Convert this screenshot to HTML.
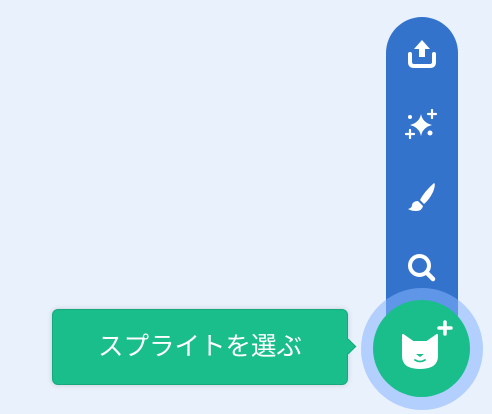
<!DOCTYPE html>
<html><head><meta charset="utf-8"><style>
html,body{margin:0;padding:0;width:492px;height:414px;overflow:hidden;background:#e9f1fc;font-family:"Liberation Sans","Noto Sans CJK JP",sans-serif;}
.bar{position:absolute;left:386px;top:17px;width:72px;height:330px;background:#3373cc;border-radius:36px 36px 0 0;}
.halo{position:absolute;left:361px;top:288px;width:122px;height:122px;border-radius:50%;background:rgba(133,178,255,0.55);}
.btn{position:absolute;left:373px;top:300px;width:97px;height:97px;border-radius:50%;background:#19be8b;}
.tip{position:absolute;left:52px;top:309px;background:#19be8b;border:1px solid #15a97b;border-radius:6px;box-shadow:0 0 6px rgba(0,0,0,0.15);color:#fff;font-size:25.5px;line-height:74px;text-align:center;box-sizing:border-box;width:296px;height:76px;}
.arrow{position:absolute;left:343px;top:341px;width:10px;height:10px;background:#19be8b;transform:rotate(45deg);border-right:1px solid #15a97b;border-top:1px solid #15a97b;}
svg{position:absolute;}
</style></head><body>
<div class="bar"></div>
<svg style="left:406px;top:38px" width="32" height="32" viewBox="0 0 32 32">
<path d="M16 2 L24 11 H19 V19 H13 V11 H8 Z" fill="#fff"/>
<path d="M4 16 V24 Q4 28 8 28 H24 Q28 28 28 24 V16" fill="none" stroke="#fff" stroke-width="4" stroke-linecap="round"/>
</svg>
<svg style="left:405px;top:108px" width="34" height="34" viewBox="0 0 34 34">
<path d="M16 6 Q17.5 14.5 27 17 Q17.5 19.5 16 28 Q14.5 19.5 5 17 Q14.5 14.5 16 6Z" fill="#fff"/>
<path d="M27 2 V10 M23 6 H31" stroke="#fff" stroke-width="2.2" stroke-linecap="round"/>
<path d="M5 22 V30 M1 26 H9" stroke="#fff" stroke-width="2.2" stroke-linecap="round"/>
<circle cx="5" cy="9" r="2" fill="#fff"/><circle cx="25" cy="25" r="2.5" fill="#fff"/>
</svg>
<svg style="left:406px;top:180px" width="32" height="34" viewBox="0 0 32 34">
<path d="M28 3 Q30 4 27 12 Q23 20 18 24 L14 20 Q18 12 28 3Z" fill="#fff"/>
<path d="M12 21 L17 26 Q16 31 10 31 Q5 31 2 29 Q6 28 6 25 Q7 21 12 21Z" fill="#fff"/>
</svg>
<svg style="left:406px;top:252px" width="32" height="34" viewBox="0 0 32 34">
<circle cx="13.5" cy="13.5" r="9.5" fill="none" stroke="#fff" stroke-width="4"/>
<path d="M21 21 L27 27" stroke="#fff" stroke-width="4.5" stroke-linecap="round"/>
</svg>
<div class="halo"></div>
<div class="btn"></div>
<svg style="left:398px;top:318px" width="58" height="56" viewBox="0 0 58 56">
<path d="M47 4 V16 M41 10 H53" stroke="#fff" stroke-width="3.5" stroke-linecap="round"/>
<path d="M5 17 L15 24 H29 L39 17 V38 Q39 50 22 50 Q5 50 5 38Z" fill="#fff" stroke="#fff" stroke-width="2" stroke-linejoin="round"/>
<path d="M18 36 H26 L22 39Z" fill="#19be8b"/>
<path d="M17 42 Q22 45 27 42" stroke="#19be8b" stroke-width="1.8" fill="none" stroke-linecap="round"/>
</svg>
<div class="tip">スプライトを選ぶ</div>
<div class="arrow"></div>
</body></html>
